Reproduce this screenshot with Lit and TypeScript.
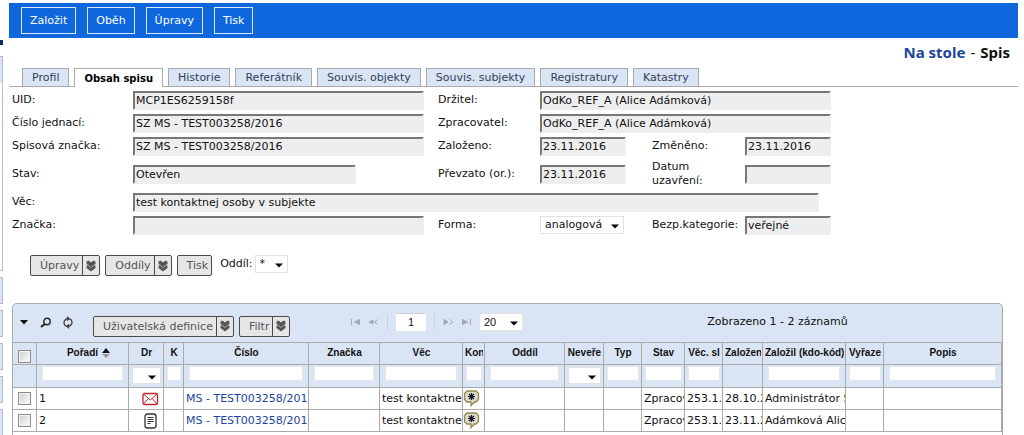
import { LitElement, html, css, svg, nothing } from "lit";
import { customElement, property } from "lit/decorators.js";
import { classMap } from "lit/directives/class-map.js";

interface Column {
  title: string;
  width: number | null;
  filter: "text" | "select" | "none";
  narrow?: boolean;
  sorted?: boolean;
}

interface RecordRow {
  order: string;
  kind: "mail" | "document";
  number: string;
  subject: string;
  state: string;
  group: string;
  created: string;
  author: string;
}

const ACTIONS = ["Založit", "Oběh", "Úpravy", "Tisk"];

const TABS = [
  "Profil",
  "Obsah spisu",
  "Historie",
  "Referátník",
  "Souvis. objekty",
  "Souvis. subjekty",
  "Registratury",
  "Katastry",
];

const COLUMNS: Column[] = [
  { title: "Pořadí", width: 92, filter: "text", sorted: true },
  { title: "Dr", width: 35, filter: "select", narrow: true },
  { title: "K", width: 20, filter: "text", narrow: true },
  { title: "Číslo", width: 125, filter: "text" },
  { title: "Značka", width: 71, filter: "text" },
  { title: "Věc", width: 83, filter: "text" },
  { title: "Kon", width: 22, filter: "text", narrow: true },
  { title: "Oddíl", width: 80, filter: "text" },
  { title: "Neveře", width: 39, filter: "select", narrow: true },
  { title: "Typ", width: 38, filter: "text", narrow: true },
  { title: "Stav", width: 43, filter: "text", narrow: true },
  { title: "Věc. sl", width: 38, filter: "text", narrow: true },
  { title: "Založen", width: 40, filter: "none" },
  { title: "Založil (kdo-kód)", width: 83, filter: "text" },
  { title: "Vyřaze", width: 38, filter: "text", narrow: true },
  { title: "Popis", width: null, filter: "text" },
];

const ROWS: RecordRow[] = [
  {
    order: "1",
    kind: "mail",
    number: "MS - TEST003258/201",
    subject: "test kontaktne",
    state: "Zpracov",
    group: "253.1.",
    created: "28.10.2",
    author: "Administrátor S",
  },
  {
    order: "2",
    kind: "document",
    number: "MS - TEST003258/201",
    subject: "test kontaktne",
    state: "Zpracov",
    group: "253.1.",
    created: "23.11.2",
    author: "Adámková Alic",
  },
];

const arrow = css`url("data:image/svg+xml,%3Csvg xmlns='http://www.w3.org/2000/svg' width='8' height='5'%3E%3Cpath d='M0 .5h8L4 4.5z' fill='%23000'/%3E%3C/svg%3E")`;

const controls = css`
  * {
    box-sizing: border-box;
  }
  button,
  input,
  select {
    margin: 0;
    font-family: inherit;
    font-size: inherit;
    color: inherit;
    border-radius: 0;
  }
  a {
    color: #1b459c;
    text-decoration: none;
  }
  select {
    appearance: none;
    border: 1px solid #e2e2e2;
    background: #fff ${arrow} no-repeat right 4px bottom 4px;
    padding: 0 4px;
    height: 18px;
    line-height: 16px;
  }
  svg {
    display: block;
  }
`;

@customElement("split-button")
export class SplitButton extends LitElement {
  @property() label = "";
  @property({ type: Boolean }) plain = false;

  static styles = [
    controls,
    css`
      :host {
        display: block;
      }
      .button {
        display: flex;
        align-items: stretch;
        height: 21px;
        padding: 0;
        border: 1px solid #4a4a4a;
        border-radius: 2px;
        background: #e6e6e6;
        color: #555;
        white-space: nowrap;
      }
      .text {
        padding: 0 3px 0 9px;
        line-height: 19px;
      }
      .more {
        display: flex;
        align-items: center;
        padding: 0 3px;
        border-left: 1px solid #4a4a4a;
      }
    `,
  ];

  render() {
    return html`<button class="button" type="button">
      <span class="text">${this.label}</span>
      ${this.plain
        ? nothing
        : html`<span class="more">
            <svg width="10" height="12" viewBox="0 0 10 12">
              <path
                d="M.5 1.500 2.500.5 5 2.500 7.500.5 9.500 1.500V4L8.500 5 9.500 6V8L5 11.500.5 8V6L1.500 5 .5 4z"
                fill="#555"
              />
              <path d="M1 4.500 5 7.500 9 4.500" stroke="#ccc" stroke-width=".7" fill="none" />
            </svg>
          </span>`}
    </button>`;
  }
}

@customElement("record-form")
export class RecordForm extends LitElement {
  static styles = [
    controls,
    css`
      :host {
        display: block;
      }
      .form {
        display: grid;
        grid-template-columns: 121px 291px 116px 86px 119px 86px;
        grid-template-rows: 18px 18px 18px 28px 18px 18px;
        row-gap: 5px;
        align-items: center;
        padding: 4px 0 0 3px;
      }
      .label {
        line-height: 14px;
      }
      .second {
        padding-left: 14px;
      }
      .third {
        padding: 0 4px 0 26px;
      }
      .field {
        width: 100%;
        min-width: 0;
        height: 19px;
        padding: 0 1px;
        border: 2px solid #eee;
        border-top-color: #777;
        border-left-color: #777;
        background: #eee;
      }
      .wide {
        grid-column: span 3;
      }
      .short {
        width: 223px;
      }
      .full {
        grid-column: span 5;
        width: 686px;
      }
      .choice {
        width: 84px;
      }
    `,
  ];

  private label(id: string, text: string, place = "") {
    return html`<label class="label ${place}" for=${id}>${text}</label>`;
  }

  private field(id: string, value: string, size = "") {
    return html`<input class="field ${size}" id=${id} readonly .value=${value} />`;
  }

  render() {
    return html`<form class="form">
      ${this.label("uid", "UID:")} ${this.field("uid", "MCP1ES6259158f")}
      ${this.label("holder", "Držitel:", "second")}
      ${this.field("holder", "OdKo_REF_A (Alice Adámková)", "wide")}
      ${this.label("ref", "Číslo jednací:")} ${this.field("ref", "SZ MS - TEST003258/2016")}
      ${this.label("clerk", "Zpracovatel:", "second")}
      ${this.field("clerk", "OdKo_REF_A (Alice Adámková)", "wide")}
      ${this.label("mark", "Spisová značka:")} ${this.field("mark", "SZ MS - TEST003258/2016")}
      ${this.label("created", "Založeno:", "second")} ${this.field("created", "23.11.2016")}
      ${this.label("changed", "Změněno:", "third")} ${this.field("changed", "23.11.2016")}
      ${this.label("state", "Stav:")} ${this.field("state", "Otevřen", "short")}
      ${this.label("taken", "Převzato (or.):", "second")} ${this.field("taken", "23.11.2016")}
      ${this.label("closed", "Datum uzavření:", "third")} ${this.field("closed", "")}
      ${this.label("subject", "Věc:")}
      ${this.field("subject", "test kontaktnej osoby v subjekte", "full")}
      ${this.label("sign", "Značka:")} ${this.field("sign", "")}
      ${this.label("form", "Forma:", "second")}
      <select class="choice" id="form">
        <option>analogová</option>
        <option>digitální</option>
      </select>
      ${this.label("security", "Bezp.kategorie:", "third")} ${this.field("security", "veřejné")}
    </form>`;
  }
}

@customElement("record-grid")
export class RecordGrid extends LitElement {
  static styles = [
    controls,
    css`
      :host {
        display: block;
      }
      .panel {
        border: 1px solid #aaa;
        border-bottom: 0;
        border-radius: 5px 5px 0 0;
        background: #d9e4f4;
      }
      .toolbar {
        display: grid;
        grid-template-columns: 337px auto 1fr;
        align-items: center;
        height: 38px;
      }
      .tools,
      .pager {
        display: flex;
        align-items: center;
      }
      .tools {
        padding-top: 6px;
      }
      .icon {
        display: flex;
        padding: 0;
        border: 0;
        background: none;
      }
      .tools .icon {
        width: 22px;
        height: 13px;
        margin-bottom: 8px;
        align-items: center;
        justify-content: center;
      }
      .definition {
        margin: 0 5px 0 14px;
      }
      .pager {
        gap: 7px;
        padding-bottom: 3px;
      }
      .divider {
        width: 1px;
        height: 16px;
        margin: 0 1px;
        background: #c8d2e2;
      }
      .page {
        width: 30px;
        height: 18px;
        padding: 0;
        border: 1px solid #fff;
        border-top-color: #ccc;
        background: #fff;
        text-align: center;
        font-family: "Liberation Sans", Arial, sans-serif;
      }
      .size {
        width: 44px;
        font-family: "Liberation Sans", Arial, sans-serif;
      }
      .info {
        padding: 0 0 3px 30px;
        text-align: center;
      }
      .table {
        width: 100%;
        table-layout: fixed;
        border-collapse: separate;
        border-spacing: 0;
        border-top: 1px solid #aaa;
      }
      .check-col {
        width: 24px;
      }
      .th,
      .td,
      .filter-cell {
        height: 22px;
        padding: 0 0 0 2px;
        border-right: 1px solid #aaa;
        border-bottom: 1px solid #aaa;
        overflow: hidden;
        white-space: nowrap;
        text-align: left;
      }
      .th {
        padding: 0 1px 2px 2px;
        font: bold 10px/16px "Liberation Sans", Arial, sans-serif;
        color: #111;
      }
      .title {
        display: flex;
        justify-content: safe center;
        align-items: center;
        gap: 4px;
        overflow: hidden;
      }
      .sorted {
        padding-left: 11px;
      }
      .filter-cell {
        height: 23px;
        padding: 1px 5px 0;
        vertical-align: top;
      }
      .narrow {
        padding: 1px 2px 0 3px;
      }
      .filter {
        display: block;
        width: 100%;
        height: 15px;
        padding: 0 2px;
        border: 1px solid #e4e9f0;
        background: #fff;
      }
      .filter-select {
        display: block;
        width: 100%;
        height: 17px;
        margin-top: 1px;
        background-position: right 4px bottom 3px;
      }
      .td {
        background: #fff;
        line-height: 20px;
      }
      .check,
      .td.check {
        padding: 0 0 0 5px;
      }
      .box {
        display: block;
        appearance: none;
        width: 13px;
        height: 13px;
        border: 1px solid #8c8c8c;
        background: linear-gradient(135deg, #ccc, #fff);
        box-shadow: inset 0 0 0 1px #f4f4f4;
      }
      .th .box {
        margin-top: 5px;
      }
      .kind {
        padding-left: 11px;
      }
      .td.note {
        padding-left: 0;
      }
      .filler {
        height: 3px;
        background: #fff;
      }
    `,
  ];

  private pagerIcon(label: string, drawing: unknown) {
    return html`<button class="icon" type="button" aria-label=${label}>
      <svg width="11" height="8" viewBox="0 0 11 8" fill="#a3aab6" stroke="#a3aab6">${drawing}</svg>
    </button>`;
  }

  private kindIcon(kind: RecordRow["kind"]) {
    return kind === "mail"
      ? html`<svg width="17" height="14" viewBox="0 0 17 14" fill="none" stroke="#c4232b" stroke-width="1.300">
          <rect x="1" y="1.500" width="14.500" height="11" rx="1.500" />
          <path d="M1.500 2 8.200 8 15 2M1.500 12 6.300 6.500M15 12 10.200 6.500" stroke-width="1" />
        </svg>`
      : html`<svg width="17" height="16" viewBox="0 0 17 16" fill="none" stroke="#333">
          <rect x="3" y="1" width="11" height="14" rx="2.500" stroke-width="1.300" />
          <path d="M5.500 4.500h6M5.500 6.500h6M5.500 8.500h6M5.500 10.500h3" />
        </svg>`;
  }

  private noteIcon() {
    return html`<svg width="17" height="17" viewBox="0 0 17 17">
      <path
        d="M4 1h9l2.500 2.500v6L13 12h-1.500L8 15.500V12H4L1.500 9.500v-6z"
        fill="#dcd9c4"
        stroke="#8f8650"
        stroke-width="1.300"
      />
      <path
        d="M8.500 3v7M5 6.500h7M6 4l5 5M11 4 6 9"
        stroke="#15152f"
        stroke-width="1.200"
      />
    </svg>`;
  }

  private filter(column: Column) {
    if (column.filter === "text")
      return html`<input class="filter" aria-label=${column.title} />`;
    if (column.filter === "select")
      return html`<select class="filter-select" aria-label=${column.title}>
        <option></option>
      </select>`;
    return nothing;
  }

  private row(r: RecordRow) {
    return html`<tr>
      <td class="td check"><input class="box" type="checkbox" aria-label=${r.order} /></td>
      <td class="td">${r.order}</td>
      <td class="td"><div class="kind">${this.kindIcon(r.kind)}</div></td>
      <td class="td"></td>
      <td class="td"><a href="#">${r.number}</a></td>
      <td class="td"></td>
      <td class="td">${r.subject}</td>
      <td class="td note">${this.noteIcon()}</td>
      <td class="td"></td>
      <td class="td"></td>
      <td class="td"></td>
      <td class="td">${r.state}</td>
      <td class="td">${r.group}</td>
      <td class="td">${r.created}</td>
      <td class="td">${r.author}</td>
      <td class="td"></td>
      <td class="td"></td>
    </tr>`;
  }

  render() {
    return html`<section class="panel">
      <div class="toolbar">
        <div class="tools">
          <button class="icon" type="button" aria-label="Menu">
            <svg width="8" height="5" viewBox="0 0 8 5"><path d="M0 0h8L4 4.500z" fill="#111" /></svg>
          </button>
          <button class="icon" type="button" aria-label="Hledat">
            <svg width="12" height="11" viewBox="0 0 12 11" fill="none" stroke="#222">
              <circle cx="7" cy="4.500" r="3.200" stroke-width="1.400" />
              <path d="M4.800 7 1 10" stroke-width="2" />
            </svg>
          </button>
          <button class="icon" type="button" aria-label="Obnovit">
            <svg width="12" height="13" viewBox="0 0 12 13" fill="none" stroke="#333" stroke-width="1.200">
              <path d="M5 10.500C1.500 9.500 1 5.500 3.500 3.500 4.300 2.900 5 2.700 6.500 2.700M7 2.700C10.500 3.500 11 7.500 8.500 9.500 7.700 10.100 7 10.300 5.500 10.300" />
              <path d="M5 .7 7 2.700 5 4.700M7 8.300 5 10.300 7 12.300" />
            </svg>
          </button>
          <split-button class="definition" label="Uživatelská definice"></split-button>
          <split-button label="Filtr"></split-button>
        </div>
        <div class="pager">
          ${this.pagerIcon("První", svg`<path d="M1.500 1v6" /><path d="M9.500 1.500v5L4.500 4z" />`)}
          ${this.pagerIcon(
            "Předchozí",
            svg`<path d="M5 2v4L1 4z" /><path d="M10 1.500 6.500 4 10 6.500" fill="none" />`
          )}
          <span class="divider"></span>
          <input class="page" aria-label="Strana" .value=${"1"} />
          <span class="divider"></span>
          ${this.pagerIcon(
            "Další",
            svg`<path d="M1 1.500v5L5 4z" /><path d="M6.500 1.500 10 4 6.500 6.500" fill="none" />`
          )}
          ${this.pagerIcon("Poslední", svg`<path d="M1.500 1.500v5L6.500 4z" /><path d="M9.500 1v6" />`)}
          <select class="size" aria-label="Počet záznamů">
            <option>20</option>
            <option>50</option>
          </select>
        </div>
        <div class="info">Zobrazeno 1 - 2 záznamů</div>
      </div>
      <table class="table">
        <colgroup>
          <col class="check-col" />
          ${COLUMNS.map((c) => html`<col style=${c.width ? `width:${c.width}px` : ""} />`)}
        </colgroup>
        <thead>
          <tr>
            <th class="th check"><input class="box" type="checkbox" aria-label="Vybrat vše" /></th>
            ${COLUMNS.map(
              (c) => html`<th class="th">
                <div class=${classMap({ title: true, sorted: !!c.sorted })}>
                  ${c.title}
                  ${c.sorted
                    ? html`<svg width="8" height="10" viewBox="0 0 8 10">
                        <path d="M0 5 4 0l4 5z" fill="#111" />
                        <path d="M0 6h8L4 10z" fill="#999" />
                      </svg>`
                    : nothing}
                </div>
              </th>`
            )}
          </tr>
          <tr>
            <td class="filter-cell"></td>
            ${COLUMNS.map(
              (c) =>
                html`<td class=${classMap({ "filter-cell": true, narrow: !!c.narrow })}>
                  ${this.filter(c)}
                </td>`
            )}
          </tr>
        </thead>
        <tbody>
          ${ROWS.map((r) => this.row(r))}
        </tbody>
      </table>
      <div class="filler"></div>
    </section>`;
  }
}

@customElement("app-root")
export class AppRoot extends LitElement {
  static styles = [
    controls,
    css`
      :host {
        display: grid;
        grid-template-columns: 3px 1fr;
        column-gap: 6px;
        height: 100vh;
        overflow: hidden;
        background: #fff;
        color: #111;
        font-family: "DejaVu Sans", Verdana, sans-serif;
        font-size: 11px;
      }
      .edge {
        display: flex;
        flex-direction: column;
        gap: 6px;
        padding-top: 40px;
      }
      .marker {
        flex: none;
        height: 5px;
        margin-bottom: 5px;
        background: #0b2a70;
      }
      .block {
        flex: none;
        height: 27px;
        border: 1px solid #b4bccb;
        border-left: 0;
        background: #d9e4f4;
      }
      .tall {
        height: 215px;
        background: linear-gradient(#d9e4f4 26px, #fff 26px);
      }
      .main {
        min-width: 0;
        padding: 3px 6px 0 0;
      }
      .actions {
        display: flex;
        align-items: center;
        gap: 11px;
        height: 35px;
        padding-left: 12px;
        background: #0f67dd;
      }
      .action {
        height: 27px;
        padding: 0 8px;
        border: 1px solid #dbe8fb;
        background: none;
        color: #fff;
      }
      .heading {
        display: flex;
        justify-content: flex-end;
        gap: 5px;
        margin: 4px 8px 0 0;
        height: 26px;
        font: 15px/20px "Noto Sans", Tahoma, sans-serif;
      }
      .place {
        font-weight: bold;
      }
      .name {
        margin: 0;
        font-size: 15px;
      }
      .tabs {
        display: flex;
        align-items: flex-end;
        gap: 5px;
        height: 19px;
        padding-left: 13px;
        border-bottom: 1px solid #aaa;
      }
      .tab {
        height: 18px;
        padding: 0 9px;
        border: 1px solid #aaa;
        border-bottom: 0;
        background: #d9e4f4;
        color: #35405c;
        white-space: nowrap;
      }
      .active {
        height: 19px;
        margin-bottom: -1px;
        background: #fff;
        color: #000;
        font-size: 10px;
        font-weight: bold;
      }
      .commands {
        display: flex;
        gap: 5px;
        padding: 21px 0 27px 21px;
      }
      .section {
        display: flex;
        gap: 2px;
        padding-left: 3px;
        line-height: 18px;
      }
      .section-choice {
        width: 33px;
      }
      .grid {
        margin: 0 15px 0 3px;
      }
    `,
  ];

  render() {
    return html`
      <aside class="edge">
        <div class="marker"></div>
        <div class="block tall"></div>
        ${[1, 2, 3, 4, 5].map(() => html`<div class="block"></div>`)}
      </aside>
      <main class="main">
        <nav class="actions">
          ${ACTIONS.map((a) => html`<button class="action" type="button">${a}</button>`)}
        </nav>
        <header class="heading">
          <a class="place" href="#">Na stole</a><span>-</span>
          <h1 class="name">Spis</h1>
        </header>
        <nav class="tabs">
          ${TABS.map(
            (t, i) =>
              html`<button type="button" class=${classMap({ tab: true, active: i === 1 })}>${t}</button>`
          )}
        </nav>
        <record-form></record-form>
        <div class="commands">
          <split-button label="Úpravy"></split-button>
          <split-button label="Oddíly"></split-button>
          <split-button label="Tisk" plain></split-button>
          <div class="section">
            <label for="section">Oddíl:</label>
            <select class="section-choice" id="section">
              <option>*</option>
            </select>
          </div>
        </div>
        <record-grid class="grid"></record-grid>
      </main>
    `;
  }
}
